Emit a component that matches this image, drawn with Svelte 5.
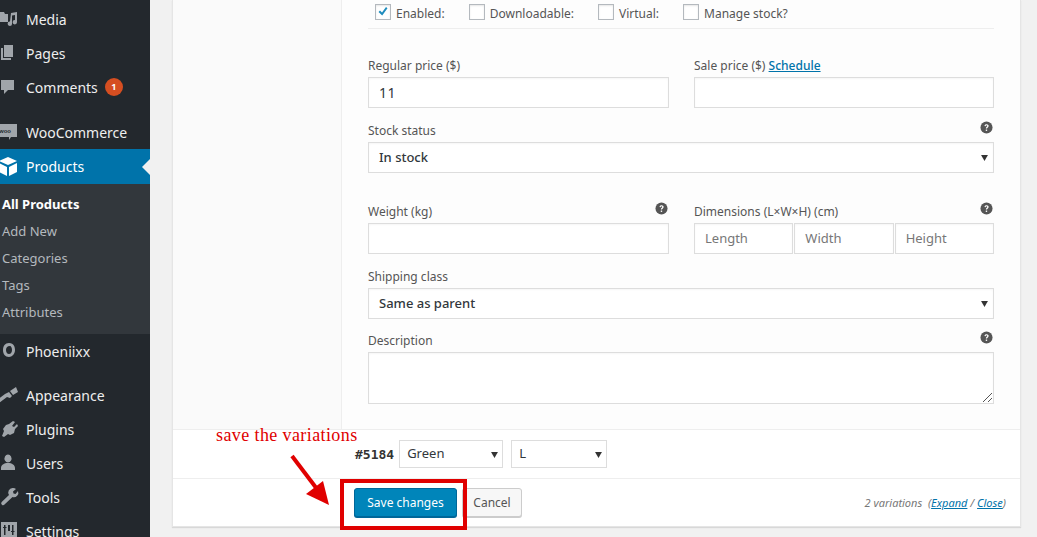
<script>
  const topItems = [
    { label: "Media", icon: "media" },
    { label: "Pages", icon: "pages" },
    { label: "Comments", icon: "comments", badge: 1 }
  ];
  const subItems = ["All Products", "Add New", "Categories", "Tags", "Attributes"];
  const bottomItems = [
    { label: "Appearance", icon: "appearance" },
    { label: "Plugins", icon: "plugins" },
    { label: "Users", icon: "users" },
    { label: "Tools", icon: "tools" },
    { label: "Settings", icon: "settings" }
  ];
  const icons = {
    media: "M-1 3h5l1 2h3v8H-1z M11 4l6-1v10a2.2 2.2 0 1 1-2-2V6l-3 .6v8a2.2 2.2 0 1 1-2-2z",
    pages: "M4 2h9v12H4z M1 5h2v10h8v2H1z",
    comments: "M1 3h13v10H8l-4 4v-4H1z",
    appearance: "M16 2l2 5-5 3-3-4z M9 7l3 4-2 2-3-1-8 6-2-3 8-6z",
    plugins: "M13 2l2 1-3 4 2 1 3-3 1 2-3 3-1 4-4 2-2-1-4 3-2-1 2-5-1-2 3-4 3-1z",
    users: "M8 1.500a3.500 4 0 1 1-.01 0z M1 15c0-3 3-5 7-5s7 2 7 5v2H1z",
    tools: "M12.500 1a4.500 4.500 0 0 1 3.500 1l-3 2.500 .5 2 2 .5 2.500-3a4.500 4.500 0 0 1-5.500 6L4.500 17.500a1.800 1.800 0 0 1-2.800-2.500L9 8a4.500 4.500 0 0 1 3.500-7z",
    settings: "M1 1h16v16H1z M4 4v2H3v1h1v7h1.500V7h1V6h-1V4z M12 4v6h-1v1h1v3h1.500v-3h1v-1h-1V4z M8 4v6h2V4z"
  };
</script>

{#snippet help()}
  <svg class="help" viewBox="0 0 14 14" width="13" height="13" aria-hidden="true">
    <circle cx="7" cy="7" r="6.500" fill="#555" />
    <path d="M4.800 5.400c.2-1.300 1.100-1.900 2.300-1.900 1.300 0 2.200.8 2.200 1.800 0 1.500-1.700 1.500-1.700 2.900H6.300c0-2 1.500-1.900 1.500-2.800 0-.4-.3-.7-.8-.7s-.8.3-.9.9z" fill="#fff" />
    <rect x="6.200" y="9.200" width="1.500" height="1.500" fill="#fff" />
  </svg>
{/snippet}

{#snippet arrow()}
  <svg class="caret" viewBox="0 0 8 7" width="7" height="6" aria-hidden="true"><path d="M0 0h8L4 7z" fill="#333" /></svg>
{/snippet}

{#snippet menuItem(item)}
  <li class="item">
    <svg class="icon" viewBox="0 0 20 20" width="20" height="20" aria-hidden="true"><path d={icons[item.icon]} fill="#a0a5aa" fill-rule="evenodd" /></svg>
    <span>{item.label}</span>
    {#if item.badge}<b class="badge">{item.badge}</b>{/if}
  </li>
{/snippet}

<div class="page">
  <nav class="sidebar">
    <ul class="group first">
      {#each topItems as item}
        {@render menuItem(item)}
      {/each}
    </ul>
    <ul class="group woo">
      <li class="item">
        <svg class="icon" viewBox="0 0 20 20" width="20" height="20" aria-hidden="true">
          <path d="M-2 2h19v13h-6l-2 3v-3H-2z" fill="#a0a5aa" />
          <text x="-1" y="11" font-size="6" font-weight="700" fill="#23282d" font-family="Liberation Sans, sans-serif">woo</text>
        </svg>
        <span>WooCommerce</span>
      </li>
      <li class="item current">
        <svg class="icon" viewBox="0 0 20 20" width="20" height="20" aria-hidden="true">
          <path d="M8 0l9 4-9 4-9-4z M-1 6l8 4v9l-8-4z M17 6v9l-8 4v-9z" fill="#fff" />
        </svg>
        <span>Products</span>
        <i class="pointer"></i>
      </li>
    </ul>
    <ul class="submenu">
      {#each subItems as sub, i}
        <li class:on={i === 0}>{sub}</li>
      {/each}
    </ul>
    <ul class="group">
      <li class="item">
        <svg class="icon" viewBox="0 0 20 20" width="20" height="20" aria-hidden="true">
          <path d="M9 2c5 0 6 4 6 7 0 4-3 7-6 7-4 0-6-3-6-7 0-4 2-7 6-7zm1 3c-3 0-4 2-4 4s1 4 3 4 3-2 3-4-1-4-2-4z" fill="#a0a5aa" fill-rule="evenodd" />
        </svg>
        <span>Phoeniixx</span>
      </li>
    </ul>
    <ul class="group last">
      {#each bottomItems as item}
        {@render menuItem(item)}
      {/each}
    </ul>
  </nav>

  <main class="main">
    <section class="card">
      <div class="variation">
        <div class="form">
          <div class="checks">
            <label class="check"><span class="box on"><svg viewBox="0 0 16 16" width="16" height="16" aria-hidden="true"><path d="M3.500 8l1.500-1.500 2 2 4-5.500 1.500 1.200-5.300 7.300z" fill="#1e8cbe" /></svg></span>Enabled:</label>
            <label class="check"><span class="box"></span>Downloadable:</label>
            <label class="check"><span class="box"></span>Virtual:</label>
            <label class="check"><span class="box"></span>Manage stock?</label>
          </div>

          <div class="two prices">
            <div>
              <div class="label">Regular price ($)</div>
              <div class="field value">11</div>
            </div>
            <div>
              <div class="label">Sale price ($) <a href="#schedule">Schedule</a></div>
              <div class="field"></div>
            </div>
          </div>

          <div class="label gap-stock">Stock status {@render help()}</div>
          <div class="field select">In stock {@render arrow()}</div>

          <div class="two weights">
            <div>
              <div class="label">Weight (kg) {@render help()}</div>
              <div class="field"></div>
            </div>
            <div>
              <div class="label">Dimensions (L×W×H) (cm) {@render help()}</div>
              <div class="dims">
                <div class="field ph">Length</div>
                <div class="field ph">Width</div>
                <div class="field ph">Height</div>
              </div>
            </div>
          </div>

          <div class="label gap-ship">Shipping class</div>
          <div class="field select">Same as parent {@render arrow()}</div>

          <div class="label gap-desc">Description {@render help()}</div>
          <div class="field area">
            <svg class="grip" viewBox="0 0 9 9" width="9" height="9" aria-hidden="true"><path d="M0 9L9 0M5 9l4-4" stroke="#555" stroke-width="1" /></svg>
          </div>
        </div>
      </div>

      <div class="attrs">
        <strong>#5184</strong>
        <div class="mini green">Green {@render arrow()}</div>
        <div class="mini size">L {@render arrow()}</div>
      </div>

      <div class="toolbar">
        <button class="primary">Save changes</button>
        <button class="cancel">Cancel</button>
        <em class="count">2 variations &nbsp;(<a href="#expand">Expand</a> / <a href="#close">Close</a>)</em>
      </div>
    </section>

    <div class="note">save the variations</div>
    <svg class="note-arrow" viewBox="0 0 50 60" width="50" height="60" aria-hidden="true">
      <path d="M3 2L28 35" stroke="#e00000" stroke-width="4" fill="none" />
      <path d="M40 51L17 40 34 27z" fill="#e00000" />
    </svg>
    <div class="note-box"></div>
  </main>
</div>

<style>
  :global(body) {
    margin: 0;
    overflow: hidden;
  }
  .page {
    display: flex;
    width: 1037px;
    height: 537px;
    overflow: hidden;
    background: #f1f1f1;
    font-family: "Noto Sans", "Open Sans", sans-serif;
    font-size: 13px;
    color: #555;
  }
  ul {
    list-style: none;
    margin: 0;
    padding: 0;
  }
  .sidebar {
    flex: 0 0 150px;
    background: #23282d;
    color: #eee;
    overflow: hidden;
    padding-top: 2px;
    font-size: 14px;
  }
  .group.woo {
    margin-top: 11px;
  }
  .group.last {
    margin-top: 10px;
  }
  .item {
    position: relative;
    display: flex;
    align-items: center;
    height: 34px;
    padding-right: 8px;
  }
  .icon {
    flex: none;
    width: 20px;
    margin-right: 6px;
    overflow: visible;
  }
  .item.current {
    background: #0073aa;
    color: #fff;
    height: 35px;
  }
  .pointer {
    position: absolute;
    right: 0;
    top: 10px;
    border: 8px solid transparent;
    border-left: 0;
    border-right-color: #f1f1f1;
  }
  .badge {
    margin-left: 7px;
    width: 18px;
    height: 18px;
    border-radius: 50%;
    background: #d54e21;
    color: #fff;
    font-size: 9px;
    line-height: 18px;
    text-align: center;
  }
  .submenu {
    height: 150px;
    box-sizing: border-box;
    padding: 7px 0 0 2px;
    background: #32373c;
    color: #b4b9be;
    font-size: 13px;
  }
  .submenu li {
    height: 27px;
    line-height: 27px;
  }
  .submenu .on {
    color: #fff;
    font-weight: 700;
  }

  .main {
    position: relative;
    flex: 1;
    padding-left: 22px;
  }
  .card {
    box-sizing: border-box;
    width: 849px;
    height: 527px;
    background: #fff;
    box-shadow: 0 1px 1px rgba(0, 0, 0, 0.1);
    border: 1px solid #e5e5e5;
    border-top: 0;
  }
  .variation {
    box-sizing: border-box;
    height: 430px;
    padding-left: 168px;
    background: #fafafa;
    border-bottom: 1px solid #eee;
  }
  .form {
    box-sizing: border-box;
    height: 100%;
    padding: 4px 26px 0 26px;
    background: #fdfdfd;
    border-left: 1px solid #eee;
  }
  .checks {
    display: flex;
    height: 24px;
    padding-left: 7px;
    border-bottom: 1px solid #eee;
  }
  .check {
    display: flex;
    gap: 5px;
    align-items: flex-start;
    line-height: 19px;
    margin-right: 24px;
    color: #555;
    font-size: 12px;
  }
  .box {
    box-sizing: border-box;
    width: 16px;
    height: 16px;
    background: #fff;
    border: 1px solid #b4b9be;
    box-shadow: inset 0 1px 2px rgba(0, 0, 0, 0.1);
  }
  .box svg {
    display: block;
    margin: -1px;
  }
  .two {
    display: grid;
    grid-template-columns: 301px 300px;
    gap: 25px;
  }
  .prices {
    margin-top: 27px;
  }
  .weights {
    margin-top: 29px;
  }
  .label {
    position: relative;
    height: 21px;
    line-height: 19px;
    font-size: 12px;
  }
  .label a,
  .count a {
    color: #0073aa;
  }
  .label a {
    font-weight: 500;
  }
  .help {
    position: absolute;
    right: 1px;
    top: 0;
  }
  .gap-stock {
    margin-top: 13px;
  }
  .gap-ship {
    margin-top: 13px;
  }
  .gap-desc {
    margin-top: 12px;
  }
  .field {
    box-sizing: border-box;
    position: relative;
    height: 31px;
    padding: 0 10px;
    background: #fff;
    border: 1px solid #ddd;
    box-shadow: inset 0 1px 2px rgba(0, 0, 0, 0.04);
    line-height: 29px;
    color: #32373c;
  }
  .value {
    font-size: 14px;
    letter-spacing: 0.5px;
  }
  .select {
    padding-left: 10px;
    color: #32373c;
    font-weight: 500;
  }
  .caret {
    position: absolute;
    right: 5px;
    top: 12px;
  }
  .dims {
    display: flex;
    gap: 1px;
  }
  .dims .field {
    flex: 1 1 0;
  }
  .ph {
    color: #777;
  }
  .area {
    height: 52px;
  }
  .grip {
    position: absolute;
    right: 1px;
    bottom: 1px;
  }

  .attrs {
    display: flex;
    align-items: center;
    gap: 4px;
    box-sizing: border-box;
    height: 49px;
    padding: 0 0 0 182px;
    border-bottom: 1px solid #eee;
    font-size: 13px;
  }
  .attrs strong {
    font-family: "DejaVu Sans Mono", monospace;
    color: #333;
    letter-spacing: 0;
    font-size: 13px;
    margin-right: 1px;
  }
  .mini {
    box-sizing: border-box;
    position: relative;
    height: 28px;
    padding: 0 7px;
    background: #fff;
    border: 1px solid #ddd;
    line-height: 25px;
    color: #32373c;
  }
  .green {
    width: 104px;
  }
  .size {
    width: 96px;
    margin-left: 4px;
  }
  .mini .caret {
    right: 4px;
    top: 11px;
  }
  .toolbar {
    display: flex;
    align-items: center;
    height: 47px;
    padding: 0 14px 0 181px;
  }
  button {
    box-sizing: border-box;
    height: 29px;
    border-radius: 3px;
    font: inherit;
    font-size: 12px;
    padding: 0;
  }
  .primary {
    width: 103px;
    background: #0085ba;
    border: 1px solid #006799;
    box-shadow: 0 1px 0 #006799;
    color: #fff;
  }
  .cancel {
    width: 60px;
    margin-left: 5px;
    background: #f7f7f7;
    border: 1px solid #ccc;
    box-shadow: 0 1px 0 #ccc;
    color: #555;
  }
  .count {
    margin-left: auto;
    font-size: 11px;
    color: #777;
  }

  .note {
    position: absolute;
    left: 66px;
    top: 425px;
    font-family: "Liberation Serif", serif;
    font-size: 18px;
    letter-spacing: 0.4px;
    color: #e00000;
    white-space: nowrap;
  }
  .note-arrow {
    position: absolute;
    left: 139px;
    top: 454px;
  }
  .note-box {
    position: absolute;
    left: 190px;
    top: 479px;
    width: 127px;
    height: 51px;
    box-sizing: border-box;
    border: 4px solid #e00000;
  }
</style>
